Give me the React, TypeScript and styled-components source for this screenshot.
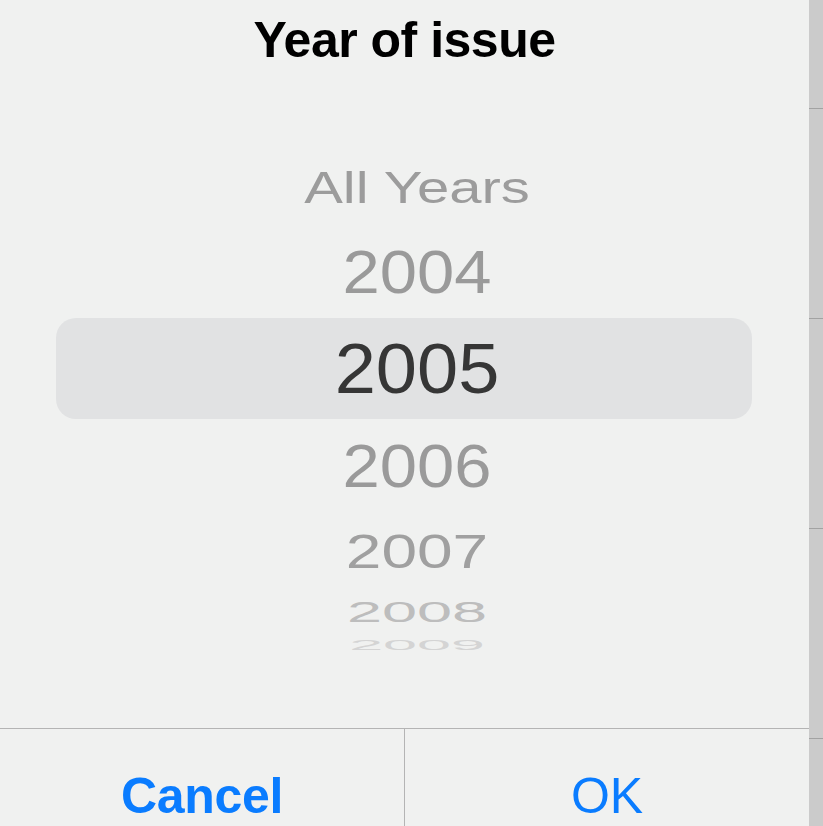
import React from "react";
import styled, { createGlobalStyle } from "styled-components";

const GlobalStyle = createGlobalStyle`
  html, body {
    margin: 0;
    padding: 0;
    background: #cbcbcb;
    overflow: hidden;
  }
  body {
    width: 823px;
    height: 826px;
    font-family: "Liberation Sans", Arial, Helvetica, sans-serif;
  }
  * { box-sizing: border-box; }
`;

const Screen = styled.div`
  display: flex;
  width: 823px;
  height: 826px;
  overflow: hidden;
`;

const Dialog = styled.div`
  width: 809px;
  flex: none;
  background: #f0f1f0;
  display: flex;
  flex-direction: column;
`;

const Title = styled.h1`
  margin: 0;
  height: 77px;
  flex: none;
  padding-top: 2px;
  line-height: 77px;
  text-align: center;
  font-size: 50px;
  font-weight: 700;
  letter-spacing: -0.5px;
  color: #000;
`;

const Picker = styled.div`
  height: 651px;
  flex: none;
  padding: 73px 57px 0 56px;
  display: flex;
  flex-direction: column;
`;

const Item = styled.div<{ $h: number; $selected?: boolean }>`
  height: ${(p) => p.$h}px;
  flex: none;
  display: flex;
  align-items: center;
  justify-content: center;
  padding-left: 26px;
  border-radius: 20px;
  background: ${(p) => (p.$selected ? "#e1e2e3" : "transparent")};
`;

const ItemLabel = styled.span<{ $size: number; $scale: number; $color: string }>`
  display: block;
  font-size: ${(p) => p.$size}px;
  line-height: 1;
  color: ${(p) => p.$color};
  transform: scaleY(${(p) => p.$scale});
  transform-origin: center;
  white-space: nowrap;
`;

const Footer = styled.div`
  flex: none;
  height: 135px;
  border-top: 1px solid #b4b4b4;
  display: grid;
  grid-template-columns: 404px 1fr;
`;

const ActionButton = styled.button<{ $bold?: boolean; $divider?: boolean }>`
  appearance: none;
  background: transparent;
  border: none;
  border-left: ${(p) => (p.$divider ? "1px solid #b4b4b4" : "none")};
  margin: 0;
  padding: 0;
  display: flex;
  align-items: center;
  justify-content: center;
  font-family: "Liberation Sans", Arial, Helvetica, sans-serif;
  font-size: 50px;
  line-height: 1;
  font-weight: ${(p) => (p.$bold ? 700 : 400)};
  letter-spacing: ${(p) => (p.$bold ? "-0.3px" : "0")};
  color: #0a7cff;
`;

const Strip = styled.div`
  flex: 1;
  display: flex;
  flex-direction: column;
  background: #cbcbcb;
`;

const StripCell = styled.div<{ $h?: number }>`
  flex: ${(p) => (p.$h ? "none" : "1")};
  height: ${(p) => (p.$h ? `${p.$h}px` : "auto")};
  border-bottom: ${(p) => (p.$h ? "1px solid #a2a2a2" : "none")};
`;

type Row = {
  label: string;
  h: number;
  size: number;
  scale: number;
  color: string;
  selected?: boolean;
};

const rows: Row[] = [
  { label: "All Years", h: 75, size: 58, scale: 0.75, color: "#9c9c9c" },
  { label: "2004", h: 93, size: 67, scale: 0.9, color: "#9a9a9a" },
  { label: "2005", h: 101, size: 74, scale: 0.95, color: "#363636", selected: true },
  { label: "2006", h: 93, size: 67, scale: 0.9, color: "#9a9a9a" },
  { label: "2007", h: 77, size: 64, scale: 0.75, color: "#a0a0a0" },
  { label: "2008", h: 44, size: 63, scale: 0.47, color: "#bdbdbd" },
  { label: "2009", h: 25, size: 61, scale: 0.23, color: "#d4d4d4" },
];

export default function App() {
  return (
    <>
      <GlobalStyle />
      <Screen>
        <Dialog>
          <Title>Year of issue</Title>
          <Picker>
            {rows.map((r) => (
              <Item key={r.label} $h={r.h} $selected={r.selected}>
                <ItemLabel $size={r.size} $scale={r.scale} $color={r.color}>
                  {r.label}
                </ItemLabel>
              </Item>
            ))}
          </Picker>
          <Footer>
            <ActionButton $bold>Cancel</ActionButton>
            <ActionButton $divider>OK</ActionButton>
          </Footer>
        </Dialog>
        <Strip>
          <StripCell $h={109} />
          <StripCell $h={210} />
          <StripCell $h={210} />
          <StripCell $h={210} />
          <StripCell />
        </Strip>
      </Screen>
    </>
  );
}
